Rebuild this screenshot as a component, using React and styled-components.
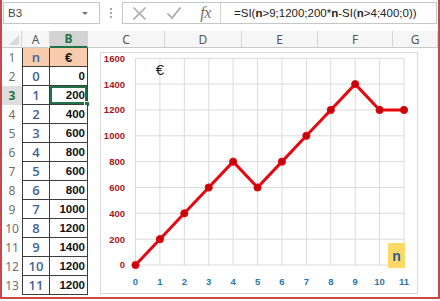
import React from 'react';
import styled, { createGlobalStyle } from 'styled-components';

const GlobalStyle = createGlobalStyle`
  html, body {
    margin: 0;
    padding: 0;
    background: #fff;
  }
  body {
    font-family: 'Liberation Sans', Arial, sans-serif;
  }
`;

const rows = [
  { n: 0, v: 0 },
  { n: 1, v: 200 },
  { n: 2, v: 400 },
  { n: 3, v: 600 },
  { n: 4, v: 800 },
  { n: 5, v: 600 },
  { n: 6, v: 800 },
  { n: 7, v: 1000 },
  { n: 8, v: 1200 },
  { n: 9, v: 1400 },
  { n: 10, v: 1200 },
  { n: 11, v: 1200 },
];

const columns = [
  { label: 'A', width: 28 },
  { label: 'B', width: 38, active: true },
  { label: 'C', width: 77 },
  { label: 'D', width: 77 },
  { label: 'E', width: 76 },
  { label: 'F', width: 75 },
  { label: 'G', width: 45 },
];

const Frame = styled.div`
  width: 440px;
  height: 299px;
  box-sizing: border-box;
  border: 2px solid #c8474a;
  border-top: none;
  display: flex;
  flex-direction: column;
  overflow: hidden;
  background: #fff;
`;

/* formula bar */

const FormulaBar = styled.div`
  display: flex;
  height: 22px;
  margin: 2px 1px 0 1px;
`;

const NameBox = styled.div`
  width: 97px;
  box-sizing: border-box;
  border: 1px solid #c6c6c6;
  display: flex;
  align-items: center;
  justify-content: space-between;
  padding: 0 11px 0 4px;
  font-size: 11.5px;
  color: #444;
`;

const DropArrow = styled.span`
  width: 0;
  height: 0;
  border-left: 3px solid transparent;
  border-right: 3px solid transparent;
  border-top: 3px solid #777;
`;

const Grip = styled.div`
  width: 22px;
  display: flex;
  flex-direction: column;
  align-items: center;
  justify-content: center;
  gap: 2px;

  span {
    width: 2px;
    height: 2px;
    background: #a8a8a8;
  }
`;

const FormulaBox = styled.div`
  flex: 1;
  box-sizing: border-box;
  border: 1px solid #c6c6c6;
  display: flex;
  align-items: center;
`;

const Tool = styled.span`
  width: ${({ w }) => w}px;
  height: 100%;
  display: flex;
  align-items: center;
  justify-content: center;
  color: #a9a9a9;
`;

const Fx = styled.span`
  font-family: 'Liberation Serif', 'Times New Roman', serif;
  font-style: italic;
  font-size: 16px;
  color: #6f6f6f;
  letter-spacing: -0.5px;
`;

const Divider = styled.span`
  width: 1px;
  height: 100%;
  background: #d4d4d4;
`;

const Formula = styled.span`
  padding-left: 13px;
  font-size: 11.5px;
  color: #222;
  white-space: nowrap;

  b {
    font-weight: bold;
  }
`;

/* column headers */

const HeaderRow = styled.div`
  display: flex;
  height: 17px;
  margin-top: 7px;
  box-sizing: border-box;
  border-bottom: 1px solid #c9c9c9;
  background: #f6f6f6;
`;

const Corner = styled.div`
  width: 20px;
  box-sizing: border-box;
  border-right: 1px solid #d6d6d6;
  position: relative;

  &::after {
    content: '';
    position: absolute;
    right: 2px;
    bottom: 2px;
    width: 0;
    height: 0;
    border-left: 10px solid transparent;
    border-bottom: 10px solid #dadada;
  }
`;

const ColHead = styled.div`
  width: ${({ w }) => w}px;
  flex: none;
  box-sizing: border-box;
  border-right: 1px solid #d6d6d6;
  display: flex;
  align-items: center;
  justify-content: center;
  font-family: 'Noto Sans', 'Liberation Sans', sans-serif;
  font-size: 12px;
  color: ${({ active }) => (active ? '#217346' : '#555')};
  font-weight: ${({ active }) => (active ? 'bold' : 'normal')};
  background: ${({ active }) => (active ? '#d3d3d3' : 'transparent')};
  border-bottom: ${({ active }) => (active ? '2px solid #217346' : 'none')};
  margin-bottom: ${({ active }) => (active ? '-1px' : '0')};
`;

/* sheet body */

const Body = styled.div`
  flex: 1;
  display: flex;
  align-items: flex-start;
`;

const Grid = styled.div`
  display: grid;
  grid-template-columns: 20px 28px 38px;
  grid-auto-rows: 19px;
`;

const RowNum = styled.div`
  display: flex;
  align-items: center;
  justify-content: center;
  font-family: 'Noto Sans', 'Liberation Sans', sans-serif;
  font-size: 12px;
  color: ${({ active }) => (active ? '#217346' : '#707070')};
  font-weight: ${({ active }) => (active ? 'bold' : 'normal')};
  background: ${({ active }) => (active ? '#dedede' : 'transparent')};
`;

const Cell = styled.div`
  box-sizing: border-box;
  border-right: 1px solid #3d3d3d;
  border-bottom: 1px solid #3d3d3d;
  display: flex;
  align-items: center;
  font-weight: bold;
  font-size: 12px;
  background: ${({ head }) => (head ? '#f8cbad' : '#fff')};
`;

const CellN = styled(Cell)`
  border-left: 1px solid #3d3d3d;
  justify-content: center;
  font-family: 'Open Sans', 'Liberation Sans', sans-serif;
  font-weight: 600;
  font-size: 13px;
  color: #40639a;
`;

const CellV = styled(Cell)`
  justify-content: ${({ head }) => (head ? 'center' : 'flex-end')};
  padding-right: ${({ head }) => (head ? '0' : '2px')};
  color: #111;
  font-size: ${({ head }) => (head ? '13px' : '11.5px')};
  position: relative;
  box-shadow: ${({ selected }) => (selected ? 'inset 0 0 0 2px #217346' : 'none')};

  &::after {
    content: '';
    display: ${({ selected }) => (selected ? 'block' : 'none')};
    position: absolute;
    right: -3px;
    bottom: -3px;
    width: 4px;
    height: 4px;
    background: #217346;
    border: 1px solid #fff;
  }
`;

/* chart */

const ChartBox = styled.div`
  width: 318px;
  height: 242px;
  margin: 4px 0 0 12px;
  box-sizing: border-box;
  border: 1px solid #d9d9d9;
  background: #fff;

  svg {
    display: block;
  }
`;

const X0 = 34.5;
const XS = 24.41;
const Y0 = 212;
const YS = 25.84 / 200;
const px = (n) => X0 + n * XS;
const py = (v) => Y0 - v * YS;

const yTicks = [0, 200, 400, 600, 800, 1000, 1200, 1400, 1600];
const xTicks = rows.map((r) => r.n);

const Chart = () => {
  const points = rows.map((r) => `${px(r.n)},${py(r.v)}`).join(' ');
  return (
    <ChartBox>
      <svg width="316" height="240" fontFamily="'Liberation Sans', Arial, sans-serif">
        {xTicks.map((n) => (
          <line key={`vx${n}`} x1={px(n)} x2={px(n)} y1={py(1600)} y2={py(0)} stroke="#dadada" strokeWidth="1" />
        ))}
        {yTicks.map((v) => (
          <line key={`hy${v}`} x1={px(0)} x2={px(11)} y1={py(v)} y2={py(v)} stroke="#dadada" strokeWidth="1" />
        ))}
        {yTicks.map((v) => (
          <text key={`ly${v}`} x="24" y={py(v) + 3.4} textAnchor="end" fontSize="9.5" fontWeight="bold" fill="#a8151c">
            {v}
          </text>
        ))}
        {xTicks.map((n) => (
          <text key={`lx${n}`} x={px(n)} y="231.5" textAnchor="middle" fontSize="9.5" fontWeight="bold" fill="#2a78ae">
            {n}
          </text>
        ))}
        <text x="59" y="22" textAnchor="middle" fontSize="15" fill="#222">€</text>
        <rect x="287" y="190" width="17" height="25" fill="#ffd966" />
        <text x="295.5" y="207.5" textAnchor="middle" fontSize="14" fontWeight="bold" fill="#1f5f8f">n</text>
        <polyline points={points} fill="none" stroke="#e8070f" strokeWidth="3" strokeLinejoin="round" />
        {rows.map((r) => (
          <circle key={`p${r.n}`} cx={px(r.n)} cy={py(r.v)} r="3.6" fill="#c4000a" stroke="#e8070f" strokeWidth="1" />
        ))}
      </svg>
    </ChartBox>
  );
};

const App = () => (
  <>
    <GlobalStyle />
    <Frame>
      <FormulaBar>
        <NameBox>
          B3
          <DropArrow />
        </NameBox>
        <Grip>
          <span />
          <span />
          <span />
        </Grip>
        <FormulaBox>
          <Tool w={33}>
            <svg width="15" height="15" viewBox="0 0 15 15">
              <path d="M1.5 1.5 L13.5 13.5 M13.5 1.5 L1.5 13.5" stroke="currentColor" strokeWidth="1.6" fill="none" />
            </svg>
          </Tool>
          <Tool w={35}>
            <svg width="16" height="14" viewBox="0 0 16 14">
              <path d="M1.5 7.5 L6 12 L14.5 1.5" stroke="currentColor" strokeWidth="1.7" fill="none" />
            </svg>
          </Tool>
          <Tool w={29}>
            <Fx>fx</Fx>
          </Tool>
          <Divider />
          <Formula>
            =SI(<b>n</b>&gt;9;1200;200*<b>n</b>-SI(<b>n</b>&gt;4;400;0))
          </Formula>
        </FormulaBox>
      </FormulaBar>

      <HeaderRow>
        <Corner />
        {columns.map((c) => (
          <ColHead key={c.label} w={c.width} active={c.active}>
            {c.label}
          </ColHead>
        ))}
      </HeaderRow>

      <Body>
        <Grid>
          <RowNum>1</RowNum>
          <CellN head>n</CellN>
          <CellV head>€</CellV>
          {rows.map((r, i) => (
            <React.Fragment key={r.n}>
              <RowNum active={i === 1}>{i + 2}</RowNum>
              <CellN>{r.n}</CellN>
              <CellV selected={i === 1}>{r.v}</CellV>
            </React.Fragment>
          ))}
        </Grid>
        <Chart />
      </Body>
    </Frame>
  </>
);

export default App;
